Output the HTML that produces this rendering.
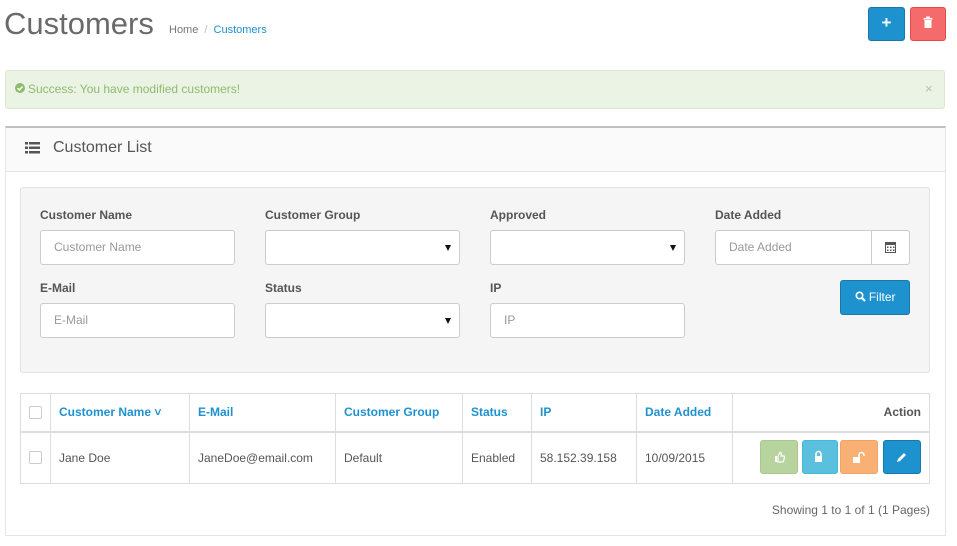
<!DOCTYPE html>
<html><head><meta charset="utf-8"><style>
*{box-sizing:border-box;margin:0;padding:0}
body{width:957px;height:546px;background:#fff;font-family:"Liberation Sans",sans-serif;font-size:12px;color:#666;position:relative;overflow:hidden}
.a{position:absolute}
.inp{position:absolute;width:195px;height:35px;background:#fff;border:1px solid #ccc;border-radius:3px;padding-left:13px;line-height:33px;color:#999;font-size:12px}
.lbl{position:absolute;font-weight:bold;color:#555;font-size:12px}
.sel:after{content:"";position:absolute;right:8px;top:14px;border-left:3px solid transparent;border-right:3px solid transparent;border-top:6px solid #111}
.btn{position:absolute;border-radius:3px;height:34px;top:440px;width:38px}
th,td{border:1px solid #ddd;text-align:left;padding:0 8px}
</style></head><body>
<div class="a" style="left:4px;top:6px;font-size:31px;color:#6a6a6a">Customers</div>
<div class="a" style="left:169px;top:24px;font-size:11px;color:#777">Home <span style="color:#bbb;padding:0 3px">/</span> <span style="color:#1e91cf">Customers</span></div>
<div class="a" style="left:868px;top:7px;width:37px;height:34px;background:#1e91cf;border:1px solid #1978ab;border-radius:3px;color:#fff;font-weight:bold;font-size:17px;text-align:center;line-height:30px">+</div>
<div class="a" style="left:910px;top:7px;width:36px;height:34px;background:#f56b6b;border:1px solid #e34a4a;border-radius:3px">
<svg width="34" height="32" viewBox="0 0 34 32"><rect x="13.5" y="12" width="7" height="8" fill="#fff"/><rect x="12.5" y="10" width="9" height="1.5" fill="#fff"/><rect x="15" y="8.5" width="4" height="1.5" fill="#fff"/></svg></div>
<div class="a" style="left:5px;top:70px;width:940px;height:39px;background:#ebf3e5;border:1px solid #dbe8cd;border-radius:3px"></div>
<svg class="a" style="left:15px;top:83px" width="10" height="10"><circle cx="5" cy="5" r="5" fill="#8fbb6c"/><path d="M2.5 5l2 2 3-3.5" stroke="#fff" stroke-width="1.5" fill="none"/></svg>
<div class="a" style="left:28px;top:82px;color:#8fbb6c;font-size:12px">Success: You have modified customers!</div>
<div class="a" style="left:925px;top:81px;color:#bbb;font-size:13px">×</div>
<div class="a" style="left:5px;top:126px;width:941px;height:410px;border:1px solid #e5e5e5;border-top:2px solid #bfbfbf"></div>
<div class="a" style="left:6px;top:128px;width:939px;height:44px;background:#fafafa;border-bottom:1px solid #e5e5e5"></div>
<svg class="a" style="left:25px;top:142px" width="16" height="12"><g fill="#555"><rect x="0" y="0" width="3" height="2.5"/><rect x="4" y="0" width="11" height="2.5"/><rect x="0" y="4.5" width="3" height="2.5"/><rect x="4" y="4.5" width="11" height="2.5"/><rect x="0" y="9" width="3" height="2.5"/><rect x="4" y="9" width="11" height="2.5"/></g></svg>
<div class="a" style="left:53px;top:139px;font-size:16px;color:#555">Customer List</div>
<div class="a" style="left:20px;top:187px;width:910px;height:186px;background:#f5f5f5;border:1px solid #e3e3e3;border-radius:3px"></div>
<div class="lbl" style="left:40px;top:208px">Customer Name</div>
<div class="lbl" style="left:265px;top:208px">Customer Group</div>
<div class="lbl" style="left:490px;top:208px">Approved</div>
<div class="lbl" style="left:715px;top:208px">Date Added</div>
<div class="inp" style="left:40px;top:230px">Customer Name</div>
<div class="inp sel" style="left:265px;top:230px"></div>
<div class="inp sel" style="left:490px;top:230px"></div>
<div class="inp" style="left:715px;top:230px;width:157px;border-radius:3px 0 0 3px">Date Added</div>
<div class="a" style="left:871px;top:230px;width:39px;height:35px;background:#fff;border:1px solid #ccc;border-radius:0 3px 3px 0"><svg width="37" height="33"><rect x="13.5" y="11.5" width="10" height="10" fill="none" stroke="#555" stroke-width="1"/><rect x="13.5" y="11.5" width="10" height="2.5" fill="#555"/><g fill="#555"><rect x="15" y="15.5" width="1.5" height="1.5"/><rect x="18" y="15.5" width="1.5" height="1.5"/><rect x="21" y="15.5" width="1.5" height="1.5"/><rect x="15" y="18.5" width="1.5" height="1.5"/><rect x="18" y="18.5" width="1.5" height="1.5"/><rect x="21" y="18.5" width="1.5" height="1.5"/></g></svg></div>
<div class="lbl" style="left:40px;top:281px">E-Mail</div>
<div class="lbl" style="left:265px;top:281px">Status</div>
<div class="lbl" style="left:490px;top:281px">IP</div>
<div class="inp" style="left:40px;top:303px">E-Mail</div>
<div class="inp sel" style="left:265px;top:303px"></div>
<div class="inp" style="left:490px;top:303px">IP</div>
<div class="a" style="left:840px;top:280px;width:70px;height:35px;background:#1e91cf;border:1px solid #1978ab;border-radius:3px;color:#fff;line-height:33px;text-align:center;font-size:12px"><svg width="11" height="11" style="vertical-align:-1px"><circle cx="4.5" cy="4.5" r="3.2" fill="none" stroke="#fff" stroke-width="1.6"/><path d="M7 7l3 3" stroke="#fff" stroke-width="2"/></svg> Filter</div>
<table class="a" style="left:20px;top:393px;width:910px;border-collapse:collapse;font-size:12px">
<tr style="height:38px;border-bottom:2px solid #ddd;color:#1e91cf;font-weight:bold">
<th style="width:30px"><div style="width:13px;height:13px;border:1px solid #ccc;border-radius:2px;background:#fff"></div></th>
<th style="width:139px">Customer Name &#709;</th><th style="width:146px">E-Mail</th><th style="width:127px">Customer Group</th><th style="width:69px">Status</th><th style="width:105px">IP</th><th style="width:96px">Date Added</th><th style="text-align:right;color:#555">Action</th></tr>
<tr style="height:52px;color:#555">
<td><div style="width:13px;height:13px;border:1px solid #ccc;border-radius:2px;background:#fff"></div></td>
<td>Jane Doe</td><td>JaneDoe@email.com</td><td>Default</td><td>Enabled</td><td>58.152.39.158</td><td>10/09/2015</td><td></td></tr>
</table>
<div class="btn" style="left:760px;background:#b7d49e;border:1px solid #a8c98b"></div>
<div class="btn" style="left:802px;width:36px;background:#5bc0de;border:1px solid #46b8da"></div>
<div class="btn" style="left:840px;background:#f8b075;border:1px solid #f4a263"></div>
<div class="btn" style="left:883px;background:#1e91cf;border:1px solid #1978ab"></div>
<svg class="a" style="left:760px;top:440px" width="162" height="34"><g fill="#fff"><path d="M15 16h2v6h-2z"/><path d="M18 22v-6l2-3.5c1 0 1.5.5 1.3 1.6L21 16h2.5c.8 0 1.2.6 1 1.3l-1 4c-.2.5-.5.7-1 .7z" fill="none" stroke="#fff" stroke-width="1.2"/><rect x="55" y="16" width="7" height="6"/><path d="M56 16v-2a2.5 2.5 0 0 1 5 0v2" fill="none" stroke="#fff" stroke-width="1.5"/><rect x="93" y="17" width="7" height="6"/><path d="M99 17v-2a2.5 2.5 0 0 1 5 0v1" fill="none" stroke="#fff" stroke-width="1.5"/><path d="M137 22l1-3 6-6 2 2-6 6z"/></g></svg>
<div class="a" style="right:27px;top:503px;color:#666;font-size:12px">Showing 1 to 1 of 1 (1 Pages)</div>
</body></html>
